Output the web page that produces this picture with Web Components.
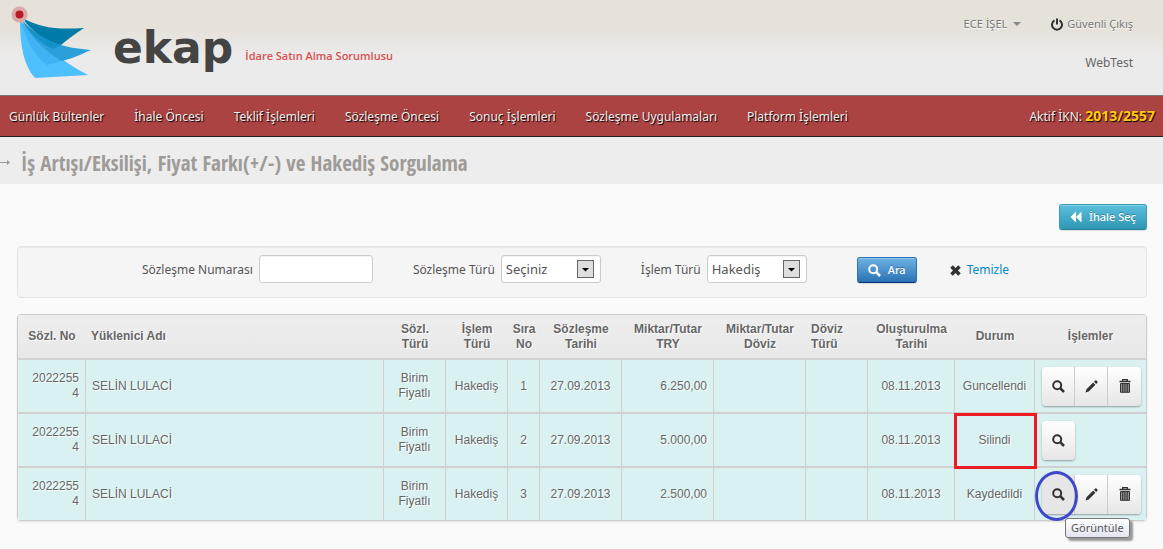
<!DOCTYPE html>
<html lang="tr">
<head>
<meta charset="utf-8">
<title>EKAP - Hakediş Sorgulama</title>
<style>
body{margin:0;background:#fafafa;color:#555;font:12px/20px "Noto Sans","Open Sans",sans-serif}
</style>
</head>
<body>
<ekap-page>
  <ekap-header slot="header" role-name="İdare Satın Alma Sorumlusu" user="ECE İŞEL" unit="WebTest"></ekap-header>
  <ekap-nav slot="header" ikn="2013/2557">
    <a href="#">Günlük Bültenler</a>
    <a href="#">İhale Öncesi</a>
    <a href="#">Teklif İşlemleri</a>
    <a href="#">Sözleşme Öncesi</a>
    <a href="#">Sonuç İşlemleri</a>
    <a href="#">Sözleşme Uygulamaları</a>
    <a href="#">Platform İşlemleri</a>
  </ekap-nav>
  <ekap-title slot="header">İş Artışı/Eksilişi, Fiyat Farkı(+/-) ve Hakediş Sorgulama</ekap-title>
  <ekap-button slot="tools" kind="info" icon="back">İhale Seç</ekap-button>
  <ekap-search></ekap-search>
  <ekap-contracts></ekap-contracts>
</ekap-page>

<script>
const ICONS = {
  back: '<svg width="12" height="12" viewBox="0 0 12 12"><path fill="currentColor" d="M6 0.500V11.500L0.500 6ZM11.500 0.500V11.500L6 6Z"/></svg>',
  search: '<svg width="13" height="13" viewBox="0 0 13 13" fill="none" stroke="currentColor"><circle cx="5.200" cy="5.200" r="4" stroke-width="2"/><path d="M8.200 8.200L12 12" stroke-width="2.600"/></svg>',
  pencil: '<svg width="13" height="13" viewBox="0 0 13 13" fill="currentColor"><path d="M0.500 12.500L1.500 9.200L8.200 2.600L10.400 4.800L3.700 11.500ZM9 1.800L10.200 0.600Q11 0 11.800 0.800L12.200 1.200Q13 2 12.400 2.800L11.200 4Z"/></svg>',
  trash: '<svg width="12" height="14" viewBox="0 0 12 14" fill="none" stroke="currentColor"><path d="M0.500 2.500H11.500M3.700 2V0.700H8.300V2" stroke-width="1.300"/><path d="M1.500 4.500H10.500V13.300H1.500Z" fill="#999"/><path d="M3.500 4V13M5.200 4V13M6.900 4V13M8.600 4V13" stroke-width=".9"/></svg>',
  remove: '<svg width="11" height="11" viewBox="0 0 11 11"><path d="M1.500 1.500L9.500 9.500M9.500 1.500L1.500 9.500" stroke="#333" stroke-width="3.600"/></svg>',
  power: '<svg width="12" height="13" viewBox="0 0 12 13" fill="none" stroke="#333" stroke-width="2"><path d="M3.500 2.400A5 5 0 1 0 8.500 2.400M6 0.500V6.500"/></svg>'
};

class Base extends HTMLElement {
  connectedCallback() {
    if (this.shadowRoot) return;
    this.attachShadow({mode: 'open'}).innerHTML = this.view();
  }
  attr(name) { return this.getAttribute(name) || ''; }
}

customElements.define('ekap-page', class extends Base {
  view() { return `
    <style>
      :host{display:block}
      main{padding:20px 16px 28px 17px;display:flex;flex-direction:column}
      .tools{display:flex;justify-content:flex-end;margin-bottom:16px}
    </style>
    <slot name="header"></slot>
    <main><div class="tools"><slot name="tools"></slot></div><slot></slot></main>`; }
});

customElements.define('ekap-header', class extends Base {
  view() { return `
    <style>
      :host{display:flex;box-sizing:border-box;height:96px;border-bottom:1px solid #777;
        background:linear-gradient(#e6e1d9 28px,#ebebeb 56px);justify-content:space-between}
      .brand{display:flex;padding-left:10px}
      .mark{margin-top:6px}
      .name{font:bold 44px/56px "DejaVu Sans",sans-serif;color:#444;margin:20px 0 0 20px}
      .role{font-size:11px;line-height:16px;font-weight:600;color:#d9504f;margin:48px 0 0 12px;font-family:"Open Sans",sans-serif}
      .user{display:flex;flex-direction:column;align-items:flex-end;padding:14px 30px 0 0;gap:19px;font-size:12px}
      .line{display:flex;gap:30px;text-shadow:0 1px 0 #fff;font-size:11px}
      a{color:#777;text-decoration:none;display:flex;align-items:center;gap:4px}
      .caret{border:4px solid transparent;border-top-color:#888;border-bottom:0;margin-left:2px}
      .unit{color:#666}
    </style>
    <div class="brand">
      <svg class="mark" width="83" height="74" viewBox="10 6 83 74" role="img" aria-label="ekap">
        <path fill="#4dc0fd" d="M20 21C20 46 24 66 35 78L88 75C62 62 40 42 20 21Z"/>
        <path fill="#3fb2f5" d="M21 21C27 42 34 55 47 65L62 61C46 50 32 36 21 21Z"/>
        <path fill="#2b9fd9" d="M22 21C38 38 54 47 91 50C80 55 68 60 61 61C44 50 32 38 22 21Z"/>
        <path fill="#007ba9" d="M22 18C40 27 54 30 84 28C76 33 68 39 61 45C44 41 32 31 22 18Z"/>
        <path fill="#1490cb" d="M22 20C32 36 42 44 53 49L61 45C44 40 31 30 22 20Z"/>
        <circle cx="19.500" cy="14.500" r="8" fill="#dba9a8"/><circle cx="19.500" cy="14.500" r="4" fill="#b81c22"/>
      </svg>
      <div class="name">ekap</div>
      <div class="role">${this.attr('role-name')}</div>
    </div>
    <div class="user">
      <div class="line">
        <a href="#">${this.attr('user')}<span class="caret"></span></a>
        <a href="#">${ICONS.power}Güvenli Çıkış</a>
      </div>
      <div class="unit">${this.attr('unit')}</div>
    </div>`; }
});

customElements.define('ekap-nav', class extends Base {
  view() { return `
    <style>
      :host{display:flex;justify-content:space-between;align-items:center;box-sizing:border-box;height:41px;
        padding:0 8px 0 9px;background:#ac4343;border-bottom:1px solid #222;color:#eee;text-shadow:1px 1px 1px #000}
      nav{display:flex;gap:30px;padding-top:2px}
      ::slotted(a){color:#eee;text-decoration:none;font-size:12px;white-space:nowrap}
      .ikn{font-size:12px}
      b{color:#fc1;font-size:14px}
    </style>
    <nav><slot></slot></nav>
    <div class="ikn">Aktif İKN: <b>${this.attr('ikn')}</b></div>`; }
});

customElements.define('ekap-title', class extends Base {
  view() { return `
    <style>
      :host{display:flex;box-sizing:border-box;height:47px;background:#ededed;padding-top:10px}
      svg{flex:none;margin:12px 11px 0 0}
      h1{margin:0;font:300 21px/32px "Liberation Sans Narrow","Open Sans Condensed","Noto Sans",sans-serif;color:#9f9b98}
    </style>
    <svg width="10" height="7" viewBox="0 0 10 7"><path d="M0 3.500H8" stroke="#999"/><path d="M7 1L10 3.500L7 6Z" fill="#999"/></svg>
    <h1><slot></slot></h1>`; }
});

customElements.define('ekap-button', class extends Base {
  view() { return `
    <style>
      :host{display:inline-flex}
      button{display:flex;align-items:center;gap:7px;height:26px;padding:0 10px;margin:0;border:1px solid #2d7fa8;border-radius:3px;
        color:#fff;font:500 11px/16px "Noto Sans",sans-serif;text-shadow:0 -1px 0 rgba(0,0,0,.3);
        box-shadow:inset 0 1px 0 rgba(255,255,255,.25),0 1px 1px rgba(0,0,0,.1);white-space:nowrap}
      .info{background:linear-gradient(#5bc0de,#2f96b4);border-color:#3a9db8 #3a9db8 #2b8099}
      .primary{background:linear-gradient(#6fb2e4,#2a72b4);border-color:#2f75b3 #2f75b3 #0b2f7c}
    </style>
    <button type="button" class="${this.attr('kind')}">${ICONS[this.attr('icon')]}<slot></slot></button>`; }
});

customElements.define('ekap-field', class extends Base {
  view() {
    const options = this.attr('options');
    const control = options
      ? `<select id="c">${options.split(',').map(o => `<option>${o}</option>`).join('')}</select>
         <svg width="17" height="18" viewBox="0 0 17 18"><rect x=".5" y=".5" width="16" height="17" fill="#dedede" stroke="#666"/><path d="M5 8H12L8.500 11.500Z"/></svg>`
      : '<input id="c" type="text">';
    return `
    <style>
      :host{display:flex;align-items:center;gap:6px}
      label{white-space:nowrap;text-align:right;padding-top:2px}
      .box{position:relative;display:flex}
      input,select{appearance:none;box-sizing:border-box;height:28px;margin:0;padding:0 4px;border:1px solid #ccc;border-radius:3px;
        background:#fff;color:#555;font:13px/20px "Noto Sans",sans-serif;box-shadow:inset 0 1px 1px rgba(0,0,0,.05)}
      input{width:114px}
      select{width:100px}
      svg{position:absolute;right:7px;top:5px;pointer-events:none}
    </style>
    <label for="c">${this.attr('label')}</label><span class="box">${control}</span>`;
  }
});

customElements.define('ekap-search', class extends Base {
  view() { return `
    <style>
      :host{display:block;margin-bottom:16px}
      form{display:flex;box-sizing:border-box;height:52px;align-items:flex-start;padding:8px 16px 0 124px;background:#f5f5f5;
        border:1px solid #e3e3e3;border-radius:4px;box-shadow:inset 0 1px 1px rgba(0,0,0,.05)}
      ekap-field{margin-right:40px}
      ekap-button{margin:2px 33px 0 10px}
      a{display:flex;align-items:center;gap:6px;height:30px;color:#08c;text-decoration:none}
    </style>
    <form>
      <ekap-field label="Sözleşme Numarası"></ekap-field>
      <ekap-field label="Sözleşme Türü" options="Seçiniz"></ekap-field>
      <ekap-field label="İşlem Türü" options="Hakediş"></ekap-field>
      <ekap-button kind="primary" icon="search">Ara</ekap-button>
      <a href="#">${ICONS.remove}<span>Temizle</span></a>
    </form>`; }
});

customElements.define('row-actions', class extends Base {
  view() {
    const names = {search: 'Görüntüle', pencil: 'Düzenle', trash: 'Sil'};
    return `
    <style>
      :host{display:inline-flex;position:relative;vertical-align:middle;border-radius:4px;box-shadow:0 1px 2px rgba(0,0,0,.35)}
      button{display:flex;align-items:center;justify-content:center;width:33px;height:39px;padding:0;border:0;border-right:1px solid #ccc;
        background:linear-gradient(#fff,#e6e6e6);color:#333}
      button:first-of-type{border-radius:4px 0 0 4px}
      button:last-of-type{border-right:0;border-radius:0 4px 4px 0}
      button:only-of-type{border-radius:4px}
      :host([hint]) button:first-of-type{background:#e6e6e6}
      .ring{position:absolute;left:-7px;top:-4px;width:43px;height:50px;box-sizing:border-box;border:3px solid #3f48cc;border-radius:50%;pointer-events:none}
      .tip{position:absolute;left:23px;top:43px;box-sizing:border-box;height:20px;padding:0 5px;border:1px solid #767676;border-radius:3px;
        background:linear-gradient(#fff,#e4e5f0);box-shadow:3px 3px 2px rgba(0,0,0,.4);color:#555;font:11px/18px "Noto Sans",sans-serif;text-shadow:none;white-space:nowrap}
    </style>
    ${this.attr('items').split(' ').map(i => `<button type="button" aria-label="${names[i]}">${ICONS[i]}</button>`).join('')}
    ${this.hasAttribute('hint') ? `<span class="ring"></span><span class="tip" role="tooltip">${names.search}</span>` : ''}`;
  }
});

customElements.define('ekap-contracts', class extends Base {
  view() {
    const rows = [
      ['1', '6.250,00', 'Guncellendi', 'search pencil trash'],
      ['2', '5.000,00', 'Silindi', 'search'],
      ['3', '2.500,00', 'Kaydedildi', 'search pencil trash']
    ];
    const body = rows.map(([no, amount, state, items]) => `
      <tr><td class="num id">20222554</td><td class="left">SELİN LULACİ</td><td>Birim Fiyatlı</td><td>Hakediş</td><td>${no}</td>
      <td>27.09.2013</td><td class="num">${amount}</td><td></td><td></td><td>08.11.2013</td>
      <td class="${state === 'Silindi' ? 'flag' : ''}">${state}</td>
      <td class="left"><row-actions items="${items}" ${no === '3' ? 'hint' : ''}></row-actions></td></tr>`).join('');
    return `
    <style>
      :host{display:block;border:1px solid #ccc;border-radius:4px;box-shadow:0 1px 2px rgba(0,0,0,.1);
        font:12px/15px "Liberation Sans",Arial,sans-serif;color:#666;text-shadow:1px 1px 0 #fff}
      table{width:100%;table-layout:fixed;border-collapse:separate;border-spacing:0}
      th,td{box-sizing:border-box;padding:0 6px;text-align:center;vertical-align:middle}
      th{height:45px;padding:0 2px;background:linear-gradient(#eee,#e8e8e8);border-bottom:2px solid #d2d2d2}
      th.left{padding-left:5px}
      td{height:54px;background:#d9f2f1;border-right:1px solid #d0d0d0;border-bottom:2px solid #d0d0d0;overflow-wrap:anywhere}
      td:last-child{border-right:0}
      tr:last-child td{border-bottom:0;height:52px}
      tr:first-child th:first-child{border-top-left-radius:3px}
      tr:first-child th:last-child{border-top-right-radius:3px}
      .left{text-align:left}
      .num{text-align:right}
      .id{padding-left:10px}
      td:last-child{padding-left:7px}
      .flag{position:relative}
      .flag::after{content:"";position:absolute;inset:-1px -3px -3px -1px;border:3px solid #ed1c24}
      .s{width:32px}.m{width:62px}.l{width:92px}
    </style>
    <table>
      <colgroup><col style="width:68px"><col><col class="m"><col class="m"><col class="s"><col style="width:82px"><col class="l"><col class="l"><col class="m"><col style="width:87px"><col style="width:80px"><col style="width:111px"></colgroup>
      <thead><tr><th>Sözl. No</th><th class="left">Yüklenici Adı</th><th>Sözl.<br>Türü</th><th>İşlem<br>Türü</th><th>Sıra<br>No</th>
      <th>Sözleşme<br>Tarihi</th><th>Miktar/Tutar<br>TRY</th><th>Miktar/Tutar<br>Döviz</th><th class="left">Döviz<br>Türü</th><th>Oluşturulma<br>Tarihi</th><th>Durum</th><th>İşlemler</th></tr></thead>
      <tbody>${body}</tbody>
    </table>`;
  }
});
</script>
</body>
</html>
